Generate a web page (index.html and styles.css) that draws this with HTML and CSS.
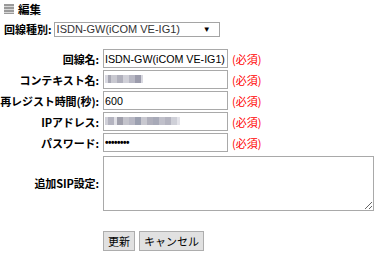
FILE: index.html
```html
<!DOCTYPE html>
<html lang="ja">
<head>
    <meta charset="UTF-8">
    <title>回線編集</title>
    <link rel="stylesheet" href="styles.css">
</head>
<body>
    <div class="page-title">
        <svg class="title-icon" width="10" height="10" viewBox="0 0 10 10">
            <rect x="0" y="0" width="10" height="10" fill="#9a9a9a"/>
            <rect x="0" y="2" width="10" height="1" fill="#d8d8d8"/>
            <rect x="0" y="5" width="10" height="1" fill="#d8d8d8"/>
            <rect x="0" y="8" width="10" height="1" fill="#d8d8d8"/>
        </svg>
        <span>編集</span>
    </div>

    <div class="line-type">
        <span class="line-type-label">回線種別:</span>
        <div class="select-box">
            <span>ISDN-GW(iCOM VE-IG1)</span>
            <span class="select-arrow">▼</span>
        </div>
    </div>

    <div class="edit-form">
        <label class="field-label">回線名:</label>
        <input class="text-field" type="text" value="ISDN-GW(iCOM VE-IG1)">
        <span class="required">(必須)</span>

        <label class="field-label">コンテキスト名:</label>
        <div class="masked-field">
            <input class="text-field" type="text" value="">
            <span class="mosaic mosaic-short"></span>
        </div>
        <span class="required">(必須)</span>

        <label class="field-label">再レジスト時間(秒):</label>
        <input class="text-field" type="text" value="600">
        <span class="required">(必須)</span>

        <label class="field-label">IPアドレス:</label>
        <div class="masked-field">
            <input class="text-field" type="text" value="">
            <span class="mosaic mosaic-long"></span>
        </div>
        <span class="required">(必須)</span>

        <label class="field-label">パスワード:</label>
        <input class="text-field password-field" type="text" value="••••••••">
        <span class="required">(必須)</span>

        <label class="field-label">追加SIP設定:</label>
        <textarea class="sip-area"></textarea>
    </div>

    <div class="actions">
        <button class="button">更新</button>
        <button class="button">キャンセル</button>
    </div>
</body>
</html>
```

FILE: styles.css
```css
* {
    box-sizing: border-box;
}

body {
    margin: 0;
    padding: 0 4px;
    background: #ffffff;
    color: #000000;
    font-family: "Noto Sans CJK JP", "Liberation Sans", sans-serif;
    font-size: 11px;
}

.page-title {
    display: flex;
    align-items: center;
    gap: 4px;
    height: 17px;
    font-weight: bold;
    font-size: 11.5px;
}

.line-type {
    display: flex;
    align-items: center;
    gap: 2px;
    margin-top: 4px;
    font-weight: bold;
}

.select-box {
    display: flex;
    align-items: center;
    justify-content: space-between;
    width: 166px;
    height: 15px;
    padding: 0 8px 0 2px;
    border: 1px solid #a5a5a5;
    font-family: "Liberation Sans", sans-serif;
    font-weight: normal;
    font-size: 11px;
    color: #333333;
}

.select-arrow {
    font-size: 8px;
    color: #000000;
}

.edit-form {
    display: grid;
    grid-template-columns: 99px 125px auto;
    column-gap: 4px;
    row-gap: 2px;
    align-items: center;
    margin-top: 12px;
    margin-left: -4px;
}

.field-label {
    text-align: right;
    font-weight: bold;
    white-space: nowrap;
    letter-spacing: -0.1px;
}

.text-field {
    width: 125px;
    height: 19px;
    margin: 0;
    padding: 0 1px;
    border: 1px solid #a9a9a9;
    font-family: "Liberation Sans", sans-serif;
    font-size: 10.7px;
    color: #000000;
}

.password-field {
    font-size: 10px;
    font-weight: bold;
    letter-spacing: -0.5px;
}

.masked-field {
    position: relative;
    height: 19px;
}

.mosaic {
    position: absolute;
    left: 2px;
    top: 5px;
    height: 8px;
}

.mosaic-short {
    width: 38px;
    background:
        linear-gradient(90deg, #d8d8e0 0 3px, #a8a8b4 3px 6px, #c8c8d0 6px 12px, #b0b0bc 12px 18px, #d0d0d8 18px 24px, #b8b8c4 24px 30px, #9c9cac 30px 36px, #d8d8e0 36px 38px);
}

.mosaic-long {
    width: 75px;
    background:
        linear-gradient(90deg, #d0d0d8 0 3px, #b4b4c0 3px 9px, #e0e0e6 9px 12px, #a0a0ac 12px 18px, #c4c4cc 18px 24px, #b8b8c4 24px 30px, #9ca0b0 30px 36px, #c8c8d0 36px 42px, #b0b0bc 42px 48px, #a8aab8 48px 54px, #c0c0ca 54px 60px, #b4b4c0 60px 66px, #cfd0d8 66px 72px, #e4e4ea 72px 75px);
}

.required {
    color: #ff0000;
    white-space: nowrap;
}

.sip-area {
    grid-column: 2 / 4;
    width: 271px;
    height: 55px;
    margin: 2px 0 0;
    border: 1px solid #a9a9a9;
    resize: both;
}

.actions {
    display: flex;
    gap: 4px;
    margin-top: 20px;
    margin-left: 99px;
}

.button {
    height: 20px;
    padding: 0 4px;
    border: 1px solid #adadad;
    border-radius: 0;
    background: #e1e1e1;
    color: #000000;
    font-family: "Noto Sans CJK JP", sans-serif;
    font-size: 11px;
}
```
